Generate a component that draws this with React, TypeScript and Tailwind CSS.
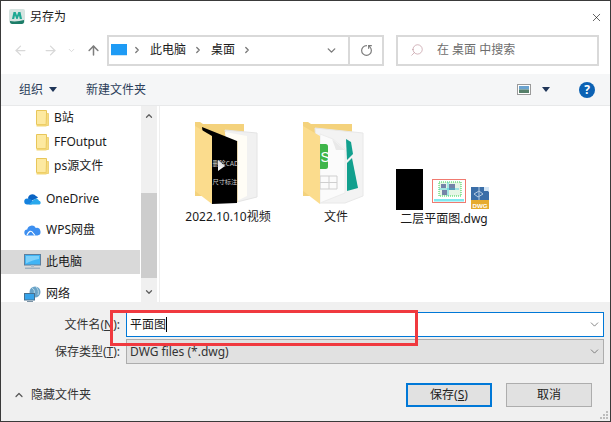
import { ArrowLeft, ArrowRight, ArrowUp, ChevronDown, ChevronRight, ChevronUp, RotateCw, Search, X } from "lucide-react";

const FONT = "font-['Noto_Sans','Noto_Sans_CJK_SC',sans-serif]";

function TinyFolder() {
  return (
    <svg width="13" height="17" viewBox="0 0 13 17" className="shrink-0">
      <path d="M0.5 0.5h10v14h-10z" fill="#fde9a0" stroke="#e8c659" />
      <path d="M10.5 3.5h2v12h-2.5v-1z" fill="#f6dc82" stroke="#e8c659" strokeWidth="0.7" />
      <path d="M0.5 14.5h10v2h-10z" fill="#f3d675" />
    </svg>
  );
}

function OneDriveIcon() {
  return (
    <svg width="17" height="12" viewBox="0 0 17 12">
      <path d="M4 5.5a4.5 4.5 0 0 1 8-2.5 3 3 0 0 1 2 1.8L7 8z" fill="#0a64c4" />
      <path d="M3.5 11.5a3 3 0 0 1-.5-6l3.5.5 3 3-2 2.5z" fill="#1582de" />
      <path d="M5 11.5l5-5a3.2 3.2 0 0 1 5 1.2 2 2 0 0 1 .5 3.8z" fill="#29a8ec" />
    </svg>
  );
}

function WpsCloudIcon() {
  return (
    <svg width="17" height="12" viewBox="0 0 17 12">
      <path d="M3.5 11.5a3 3 0 0 1-.3-6A4.6 4.6 0 0 1 11.8 4a3.8 3.8 0 0 1 1.7 7.5z" fill="#3d8ff0" />
      <path d="M3 11c2-4 4-5 6-2l2 2.5" fill="none" stroke="#fff" strokeWidth="1.2" />
    </svg>
  );
}

function MonitorIcon() {
  return (
    <svg width="17" height="16" viewBox="0 0 17 16">
      <rect x="0.5" y="0.5" width="16" height="10.5" fill="#3fb4f5" stroke="#5d7f9e" />
      <path d="M2 2h13v3C10 6 6 7 2 9.5z" fill="#7ed0f9" />
      <rect x="7" y="11" width="3" height="2" fill="#a8bccb" />
      <rect x="1" y="13.5" width="15" height="1.5" fill="#9fb1c0" />
    </svg>
  );
}

function NetworkIcon() {
  return (
    <svg width="17" height="17" viewBox="0 0 17 17">
      <circle cx="11" cy="6" r="5.5" fill="#6aa3c7" />
      <path d="M8 2c2 1 3 3 2 6M12 1c2 2 3 4 2 8" stroke="#b7d8e8" fill="none" />
      <rect x="0.5" y="7.5" width="10" height="6.5" fill="#36a3ea" stroke="#47708f" />
      <rect x="3" y="15" width="6" height="1.5" fill="#7c93a5" />
    </svg>
  );
}

function FolderBack({ children }: { children: React.ReactNode }) {
  return (
    <svg width="66" height="82" viewBox="0 0 66 82">
      <path d="M0 0h5l3 2h41v72H0z" fill="#f4d27c" />
      {children}
      <path d="M0 4l17 10v68L0 69z" fill="#fbdc8d" />
    </svg>
  );
}

function VideoFolder() {
  return (
    <FolderBack>
      <path d="M30 8l32 3v64l-20 5z" fill="#f1f1f1" stroke="#e4e4e4" />
      <path d="M30 10l22 4v60l-12 6z" fill="#fffdf6" />
      <path d="M7 5l35 14v62l-25 1z" fill="#000" />
      <path d="M23 38l7 6-7 5z" fill="#f4f4f4" />
      <text x="17.5" y="44" fontSize="6.6" fill="#d0d0d0" fontFamily="Noto Sans CJK SC, sans-serif">删除CAD</text>
      <text x="17.5" y="62" fontSize="6.2" fill="#d0d0d0" fontFamily="Noto Sans CJK SC, sans-serif">尺寸标注</text>
      <path d="M42 19h1v61h-1z" fill="#e9d8b0" />
    </FolderBack>
  );
}

function SheetFolder() {
  return (
    <FolderBack>
      <path d="M12 6l48 5v63l-18 7H17z" fill="#f3f3f3" stroke="#e8e8e8" />
      <path d="M43 17l5 3 2 12-6 6z" fill="#12a08e" />
      <path d="M49 36l6 30-11 3V41z" fill="#12a08e" />
      <path d="M17 12l13 5 12 10v44l-25 10z" fill="#fbfbfb" stroke="#ececec" />
      <path d="M29 17l4 11h9z" fill="#e9e9e9" />
      <rect x="12" y="22" width="13" height="25" rx="2.5" fill="#3fb54a" />
      <text x="17.5" y="40" fontSize="14" fill="#fff" fontFamily="Liberation Sans, sans-serif">S</text>
      <path d="M17 54h17v13H17zM17 60.5h17M26 54v13" fill="none" stroke="#cfcfcf" />
    </FolderBack>
  );
}

function DwgThumbs() {
  return (
    <div className="flex items-end pr-[4px]">
      <div className="w-[27px] h-[41px] bg-black" />
      <svg width="34" height="24" viewBox="0 0 34 24" className="ml-[9px] mb-[7px]">
        <rect x="0.5" y="0.5" width="33" height="23" fill="#fff" stroke="#f07a70" />
        <rect x="7" y="3" width="22" height="14" fill="#e6f6e6" stroke="#31d24a" strokeDasharray="1 1" />
        <path d="M9 5h5v4H9zM17 5h6v6h-6zM10 11h5v5h-5z" fill="#7484a8" />
        <path d="M16 3v14M7 10h20" stroke="#27c7d8" strokeWidth="0.7" />
        <rect x="2" y="20" width="30" height="2.5" fill="#7fe9ef" />
      </svg>
      <svg width="18" height="22" viewBox="0 0 18 22" className="ml-[5px] mb-[1px]">
        <path d="M0 0h13l5 5v10H0z" fill="#3b6ea8" />
        <path d="M13 0h5v4h-5z" fill="#d5e6f5" />
        <rect x="0" y="13" width="18" height="9" fill="#e6ab2f" />
        <path d="M3 7l5-3 4 3-5 3zM8 0v13" stroke="#b5cbe2" fill="none" />
        <text x="1.5" y="20.5" fontSize="6.2" fontWeight="700" fill="#fff" fontFamily="Liberation Sans, sans-serif">DWG</text>
      </svg>
    </div>
  );
}

function NavRow({ icon, label }: { icon: React.ReactNode; label: string }) {
  return (
    <div className="flex items-center h-6 shrink-0">
      {icon}
      <span className="ml-[5px] whitespace-nowrap">{label}</span>
    </div>
  );
}

export default function App() {
  return (
    <div className={`${FONT} relative w-[611px] h-[422px] flex flex-col overflow-hidden bg-white border border-[#3a3a3a] text-[12px] text-[#1a1a1a]`}>
      {/* title bar */}
      <div className="h-[32px] flex items-center pl-[8px] pr-[5px] shrink-0">
        <svg width="16" height="16" viewBox="0 0 16 16">
          <rect x="0" y="0" width="16" height="14" rx="2" fill="#d6e4e1" />
          <path d="M3 10l1.5-7h2.2L8 6.5 9.3 3h2.2L13 10h-2.2l-.8-3.5L8.6 10H7.4L6 6.5 5.2 10z" fill="#1ea893" />
          <path d="M1 12c5 1 10 0 14-1v2c0 1-1 2-2 2H3c-1 0-2-1-2-2z" fill="#1c7d68" />
        </svg>
        <span className="ml-[5px] text-[12px]">另存为</span>
        <X size={13} strokeWidth={1.1} className="ml-auto mr-[2px] text-black" />
      </div>

      {/* address row */}
      <div className="h-[41px] flex items-center pb-[7px] shrink-0">
        <div className="w-[106px] flex items-center pl-[12px] shrink-0">
          <ArrowLeft size={15} strokeWidth={2} className="text-[#d8d8d8]" />
          <ArrowRight size={15} strokeWidth={2} className="ml-[15px] text-[#d8d8d8]" />
          <ChevronDown size={9} strokeWidth={2.5} className="ml-[9px] text-[#d8d8d8]" />
          <ArrowUp size={15} strokeWidth={2.4} className="ml-[10px] text-[#7e7e7e]" />
        </div>
        <div className="w-[277px] h-[31px] flex items-center border-2 border-[#d9d9d9] shrink-0">
          <svg width="16" height="12" viewBox="0 0 16 12" className="ml-[2px] shrink-0">
            <rect width="16" height="11" fill="#1e9bf5" />
            <path d="M0 11h16v1H0z" fill="#cfe6f7" />
          </svg>
          <ChevronRight size={10} strokeWidth={3} className="ml-[5px] text-[#777]" />
          <span className="ml-[8px]">此电脑</span>
          <ChevronRight size={10} strokeWidth={3} className="ml-[7px] text-[#777]" />
          <span className="ml-[8px]">桌面</span>
          <ChevronRight size={10} strokeWidth={3} className="ml-[7px] text-[#777]" />
          <div className="ml-auto w-[34px] h-full flex items-center justify-center">
            <ChevronDown size={13} strokeWidth={2.6} className="text-[#7c7c7c]" />
          </div>
          <div className="w-[34px] h-full flex items-center justify-center border-l-2 border-[#d9d9d9]">
            <RotateCw size={13} strokeWidth={2.2} className="text-[#7c7c7c] -scale-x-100 rotate-90" />
          </div>
        </div>
        <div className="ml-[12px] w-[203px] h-[31px] flex items-center border-2 border-[#d9d9d9] shrink-0 text-[#6d6d6d]">
          <Search size={14} strokeWidth={1} className="ml-[12px] -scale-x-100 text-[#b5838d]" />
          <span className="ml-[13px] whitespace-pre">在 桌面 中搜索</span>
        </div>
      </div>

      {/* toolbar */}
      <div className="h-[32px] flex items-center bg-[#f5f6f7] border-b border-[#e8e9ea] text-[#2c3e5a] shrink-0">
        <span className="ml-[18px]">组织</span>
        <svg width="8" height="5" viewBox="0 0 8 5" className="ml-[6px]">
          <path d="M0 0h8L4 5z" fill="#1f3558" />
        </svg>
        <span className="ml-[29px]">新建文件夹</span>
        <div className="ml-auto flex items-center">
          <svg width="14" height="11" viewBox="0 0 14 11">
            <rect x="0.5" y="0.5" width="13" height="10" fill="#fff" stroke="#9a9a9a" />
            <rect x="2" y="2" width="10" height="3.5" fill="#6ba3cf" />
            <rect x="2" y="5.5" width="10" height="3.5" fill="#56806a" />
          </svg>
          <svg width="8" height="5" viewBox="0 0 8 5" className="ml-[11px]">
            <path d="M0 0h8L4 5z" fill="#1f3558" />
          </svg>
          <div className="ml-[29px] mr-[15px] w-4 h-4 rounded-full bg-[#0c62b4] text-white font-bold text-[12px] leading-4 text-center">?</div>
        </div>
      </div>

      {/* main */}
      <div className="h-[196px] flex shrink-0">
        <div className="w-[139px] shrink-0 flex flex-col overflow-hidden">
          <div className="flex flex-col pl-[35px]">
            <NavRow icon={<TinyFolder />} label="B站" />
            <NavRow icon={<TinyFolder />} label="FFOutput" />
            <NavRow icon={<TinyFolder />} label="ps源文件" />
          </div>
          <div className="pl-[23px] mt-[9px]">
            <NavRow icon={<OneDriveIcon />} label="OneDrive" />
          </div>
          <div className="pl-[23px] mt-[7px]">
            <NavRow icon={<WpsCloudIcon />} label="WPS网盘" />
          </div>
          <div className="pl-[23px] mt-[8px] bg-[#d9d9d9] shrink-0">
            <NavRow icon={<MonitorIcon />} label="此电脑" />
          </div>
          <div className="pl-[23px] mt-[8px]">
            <NavRow icon={<NetworkIcon />} label="网络" />
          </div>
        </div>
        <div className="ml-[1px] w-[16px] shrink-0 bg-[#f0f0f0] flex flex-col items-center">
          <div className="h-[20px] flex items-center justify-center shrink-0">
            <ChevronUp size={10} strokeWidth={3} className="text-[#606060]" />
          </div>
          <div className="mt-[67px] w-full h-[85px] bg-[#cdcdcd] shrink-0" />
          <div className="mt-auto h-[20px] flex items-center justify-center shrink-0">
            <ChevronDown size={10} strokeWidth={3} className="text-[#606060]" />
          </div>
        </div>
        <div className="ml-[2px] w-[1px] bg-[#eeeeee] shrink-0" />
        <div className="flex-1 grid grid-cols-[108px_108px_108px] content-start pt-[16px] pl-[14px]">
          <div className="flex flex-col items-center">
            <VideoFolder />
            <span className="mt-[4px] whitespace-nowrap">2022.10.10视频</span>
          </div>
          <div className="flex flex-col items-center">
            <SheetFolder />
            <span className="mt-[4px] whitespace-nowrap">文件</span>
          </div>
          <div className="flex flex-col items-center pt-[47px]">
            <DwgThumbs />
            <span className="whitespace-nowrap">二层平面图.dwg</span>
          </div>
        </div>
      </div>

      {/* bottom panel */}
      <div className="relative flex-1 bg-[#f0f0f0] flex flex-col">
        <div className="flex items-center h-[25px] mt-[10px]">
          <span className="w-[121px] pr-[2px] text-right text-[#333]">
            文件名(<span className="underline">N</span>):
          </span>
          <div className="ml-[4px] w-[478px] h-[25px] bg-white border border-[#0078d7] flex items-center pl-[3px]">
            <span>平面图</span>
            <span className="w-px h-[15px] bg-black" />
            <ChevronDown size={13} strokeWidth={1.3} className="ml-auto mr-[2px] text-[#555]" />
          </div>
        </div>
        <div className="flex items-center h-[25px] mt-[2px]">
          <span className="w-[121px] pr-[2px] text-right text-[#333]">
            保存类型(<span className="underline">T</span>):
          </span>
          <div className="ml-[4px] w-[478px] h-[25px] bg-[#e1e1e1] border border-[#adadad] flex items-center pl-[3px] text-[#333]">
            <span>DWG files (*.dwg)</span>
            <ChevronDown size={13} strokeWidth={1.3} className="ml-auto mr-[2px] text-[#555]" />
          </div>
        </div>
        <div className="flex items-center mt-[19px]">
          <ChevronUp size={12} strokeWidth={2.4} className="ml-[12px] text-[#555]" />
          <span className="ml-[6px] text-[#333]">隐藏文件夹</span>
          <button className="ml-auto w-[86px] h-[24px] bg-[#e1e1e1] border-2 border-[#0078d7] text-[#222]">
            保存(<span className="underline">S</span>)
          </button>
          <button className="ml-[14px] mr-[18px] w-[86px] h-[24px] bg-[#e1e1e1] border border-[#adadad] text-[#222]">
            取消
          </button>
        </div>
        {/* resize grip */}
        <svg width="9" height="9" viewBox="0 0 9 9" className="absolute right-[1px] bottom-[1px]">
          <path d="M6 0h2v2H6zM3 3h2v2H3zM6 3h2v2H6zM0 6h2v2H0zM3 6h2v2H3zM6 6h2v2H6z" fill="#bcbcbc" />
        </svg>
      </div>

      {/* red annotation over the file name row */}
      <div className="absolute left-[109px] top-[309px] w-[308px] h-[36px] border-[3px] border-[#f0393f] pointer-events-none" />
    </div>
  );
}
